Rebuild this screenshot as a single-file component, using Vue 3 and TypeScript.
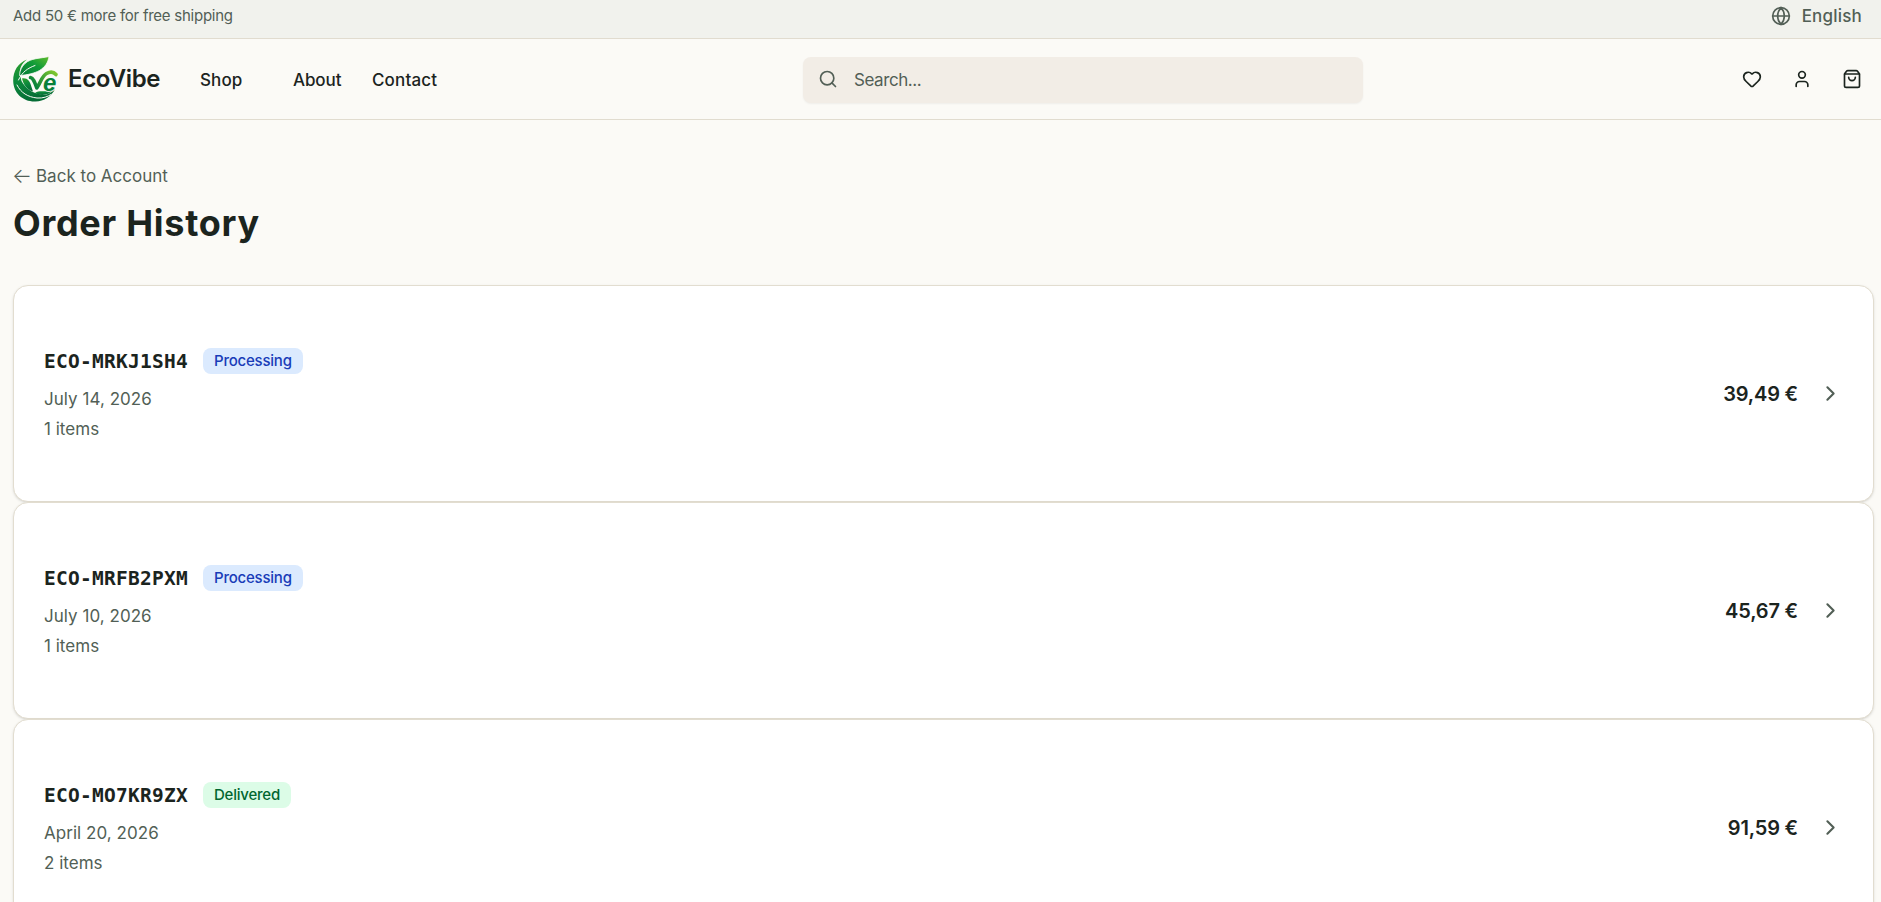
<script setup lang="ts">
interface Order {
  id: string
  status: 'Processing' | 'Delivered'
  date: string
  items: number
  total: string
}

const orders: Order[] = [
  { id: 'ECO-MRKJ1SH4', status: 'Processing', date: 'July 14, 2026', items: 1, total: '39,49 €' },
  { id: 'ECO-MRFB2PXM', status: 'Processing', date: 'July 10, 2026', items: 1, total: '45,67 €' },
  { id: 'ECO-MO7KR9ZX', status: 'Delivered', date: 'April 20, 2026', items: 2, total: '91,59 €' },
]

const shoot = 'M22.500 27.500C25.500 28 27 33 28.800 38C32.500 33 33.500 26.500 38.500 23.500C42 21.500 45.500 21.500 48 24.500'
</script>

<template>
  <div class="page">
    <div class="topbar">
      <span class="promo">Add 50 € more for free shipping</span>
      <button class="language" type="button">
        <svg class="icon" viewBox="0 0 24 24">
          <circle cx="12" cy="12" r="10" />
          <path d="M12 2a14.5 14.5 0 0 0 0 20 14.5 14.5 0 0 0 0-20M2 12h20" />
        </svg>
        <span>English</span>
      </button>
    </div>

    <header class="header">
      <div class="start">
        <a class="brand">
          <svg class="logo" viewBox="5 6 46 46">
            <defs>
              <linearGradient id="ring" x1="0" y1="0" x2="0.3" y2="1">
                <stop offset="0" stop-color="#2fa12c" />
                <stop offset="0.5" stop-color="#0c8a3c" />
                <stop offset="1" stop-color="#056c35" />
              </linearGradient>
              <linearGradient id="leaf" x1="0" y1="1" x2="1" y2="0">
                <stop offset="0" stop-color="#067a36" />
                <stop offset="0.55" stop-color="#119b38" />
                <stop offset="1" stop-color="#62bd2c" />
              </linearGradient>
              <linearGradient id="sprout" gradientUnits="userSpaceOnUse" x1="29" y1="38" x2="47" y2="21">
                <stop offset="0" stop-color="#07823a" />
                <stop offset="1" stop-color="#83c92e" />
              </linearGradient>
            </defs>
            <path
              fill="url(#ring)"
              d="M19 9.500C10 13 5 21 5.200 31C5.500 43 15 52 27.500 51.500C36 51.200 43.500 46.500 47 39C43 43.500 38 45.500 33 44.500C24 43 17 38 13.500 31L12 25C11 20 13 14 19 9.500Z"
            />
            <path
              fill="url(#leaf)"
              stroke="#fbfaf6"
              stroke-width="0.800"
              d="M41 6.500C32 8.500 23 8 17 13.500C13.500 17 12 20 11.500 25.500C20 25 27 23 31.500 20.500C37 17 40 13 41 6.500Z"
            />
            <path class="vein" d="M27 15.500C20 18 14 22 10.500 30M9 35C13 43 20 47 29 48C35 48.500 40 46.500 43 44.500" />
            <path fill="url(#ring)" d="M14 28.500C19 27.500 22 31 23.500 37L25 41.500C19 39.500 15.500 35 14 28.500Z" />
            <path fill="url(#ring)" d="M27 43C32 39.500 38 43 45 40C41 45 33 46.500 27 43Z" />
            <path class="shoot halo" :d="shoot" />
            <path class="shoot" stroke="url(#sprout)" :d="shoot" />
            <text class="mark" x="35" y="40.500">e</text>
          </svg>
          <span class="brand-name">EcoVibe</span>
        </a>
        <nav class="nav">
          <a class="shop">Shop</a>
          <a class="about">About</a>
          <a class="contact">Contact</a>
        </nav>
      </div>
      <label class="search">
        <svg class="icon" viewBox="0 0 24 24">
          <circle cx="11" cy="11" r="8" />
          <path d="m21 21-4.340-4.340" />
        </svg>
        <span>Search...</span>
      </label>
      <div class="actions">
        <svg class="icon" viewBox="0 0 24 24">
          <path
            d="M2 9.500a5.500 5.500 0 0 1 9.591-3.676.56.56 0 0 0 .818 0A5.490 5.490 0 0 1 22 9.500c0 2.290-1.500 4-3 5.500l-5.492 5.313a2 2 0 0 1-3 .019L5 15c-1.500-1.500-3-3.200-3-5.500"
          />
        </svg>
        <svg class="icon" viewBox="0 0 24 24">
          <path d="M19 21v-2a4 4 0 0 0-4-4H9a4 4 0 0 0-4 4v2" />
          <circle cx="12" cy="7" r="4" />
        </svg>
        <svg class="icon" viewBox="0 0 24 24">
          <path d="M16 10a4 4 0 0 1-8 0M3.103 6.034h17.794" />
          <path
            d="M3.400 5.467a2 2 0 0 0-.4 1.200V20a2 2 0 0 0 2 2h14a2 2 0 0 0 2-2V6.667a2 2 0 0 0-.4-1.200l-2-2.667A2 2 0 0 0 17 2H7a2 2 0 0 0-1.600.8z"
          />
        </svg>
      </div>
    </header>

    <main class="content">
      <a class="back"><span class="arrow">←</span><span>Back to Account</span></a>
      <h1>Order History</h1>
      <section class="orders">
        <article v-for="order in orders" :key="order.id" class="card">
          <div class="details">
            <div class="title">
              <span class="number">{{ order.id }}</span>
              <span class="badge" :class="order.status.toLowerCase()">{{ order.status }}</span>
            </div>
            <p class="date">{{ order.date }}</p>
            <p class="count">{{ order.items }} items</p>
          </div>
          <div class="summary">
            <span class="total">{{ order.total }}</span>
            <svg class="icon chevron" viewBox="0 0 24 24"><path d="m9 18 6-6-6-6" /></svg>
          </div>
        </article>
      </section>
    </main>
  </div>
</template>

<style>
body {
  margin: 0;
  background: #fbfaf6;
  overflow: hidden;
}
</style>

<style scoped>
.page {
  box-sizing: border-box;
  height: 902px;
  overflow: hidden;
  background: #fbfaf6;
  color: #1b241e;
  font-family: Inter, "Liberation Sans", sans-serif;
  font-size: 17px;
  line-height: 26px;
}
.icon {
  flex: none;
  width: 20px;
  height: 20px;
  fill: none;
  stroke: currentColor;
  stroke-width: 2;
  stroke-linecap: round;
  stroke-linejoin: round;
}
.topbar {
  display: flex;
  align-items: center;
  justify-content: space-between;
  box-sizing: border-box;
  height: 39px;
  padding: 0 19px 6px 13px;
  border-bottom: 1px solid #e1dccf;
  background: #f1f2ed;
  color: #525f56;
}
.promo {
  font-size: 15px;
  letter-spacing: -0.25px;
}
.language {
  display: flex;
  align-items: center;
  gap: 11px;
  padding: 0;
  border: 0;
  background: none;
  color: inherit;
  font: inherit;
  font-weight: 500;
  letter-spacing: 0.2px;
}
.header {
  display: grid;
  grid-template-columns: 790px 560px 1fr;
  align-items: center;
  box-sizing: border-box;
  height: 81px;
  padding: 0 19px 0 13px;
  border-bottom: 1px solid #e1dccf;
}
.start,
.brand,
.nav {
  display: flex;
  align-items: center;
}
.brand {
  gap: 9px;
}
.logo {
  width: 46px;
  height: 46px;
}
.vein {
  fill: none;
  stroke: #fbfaf6;
  stroke-width: 1;
  stroke-linecap: round;
}
.shoot {
  fill: none;
  stroke-width: 3.6;
  stroke-linecap: round;
  stroke-linejoin: round;
}
.halo {
  stroke: #fbfaf6;
  stroke-width: 5.6;
}
.mark {
  fill: #08803a;
  stroke: #fbfaf6;
  stroke-width: 1.6px;
  paint-order: stroke;
  font: italic 700 24px "Liberation Sans", sans-serif;
}
.brand-name {
  width: 94px;
  font-size: 24px;
  font-weight: 600;
  letter-spacing: -0.35px;
}
.nav {
  padding-top: 1px;
  margin-left: 38px;
  font-weight: 500;
}
.shop {
  width: 93px;
  letter-spacing: 0.1px;
}
.about {
  width: 79px;
  letter-spacing: -0.1px;
}
.contact {
  letter-spacing: 0.14px;
}
.search {
  display: flex;
  align-items: center;
  gap: 16px;
  box-sizing: border-box;
  height: 46px;
  margin-top: 1px;
  padding: 0 0 1px 15px;
  border-radius: 8px;
  background: #f2ede6;
  box-shadow: 0 1px 2px rgb(0 0 0 / 5%);
  color: #525f56;
  letter-spacing: -0.44px;
}
.search span {
  padding-top: 1px;
}
.actions {
  display: flex;
  justify-content: flex-end;
  gap: 30px;
}
.content {
  padding: 43px 7px 0 13px;
}
.back {
  display: flex;
  width: max-content;
  color: #525f56;
}
.arrow {
  width: 23px;
  font-size: 21px;
  font-weight: 300;
  text-indent: -1px;
}
h1 {
  margin: 12px 0 0;
  font-size: 36px;
  font-weight: 700;
  line-height: 44px;
  letter-spacing: 0.72px;
}
.orders {
  margin-top: 40px;
}
.card {
  display: flex;
  align-items: center;
  justify-content: space-between;
  box-sizing: border-box;
  height: 217px;
  padding: 0 30px;
  border: 1px solid #e2ddd0;
  border-radius: 15px;
  background: #fff;
  box-shadow: 0 1px 3px rgb(0 0 0 / 10%), 0 1px 2px -1px rgb(0 0 0 / 10%);
}
.title {
  display: flex;
  align-items: center;
  gap: 15px;
  height: 32px;
}
.number {
  width: 144px;
  padding-top: 1px;
  font: 700 19.5px/31px "DejaVu Sans Mono", monospace;
  letter-spacing: 0.26px;
  white-space: nowrap;
}
.badge {
  padding: 0 11px;
  border-radius: 8px;
  font-size: 15px;
  font-weight: 500;
  letter-spacing: -0.22px;
}
.processing {
  background: #dbeafe;
  color: #193cb8;
}
.delivered {
  background: #dcfce7;
  color: #016630;
}
.date,
.count {
  margin: 9px 0 0;
  color: #525f56;
}
.date {
  letter-spacing: 0.04px;
}
.count {
  margin-top: 4px;
  letter-spacing: 0.02px;
}
.summary {
  display: flex;
  align-items: center;
  gap: 20px;
}
.total {
  font-size: 20px;
  font-weight: 600;
  letter-spacing: -0.18px;
}
.chevron {
  width: 25px;
  height: 25px;
  color: #525f56;
}
</style>
